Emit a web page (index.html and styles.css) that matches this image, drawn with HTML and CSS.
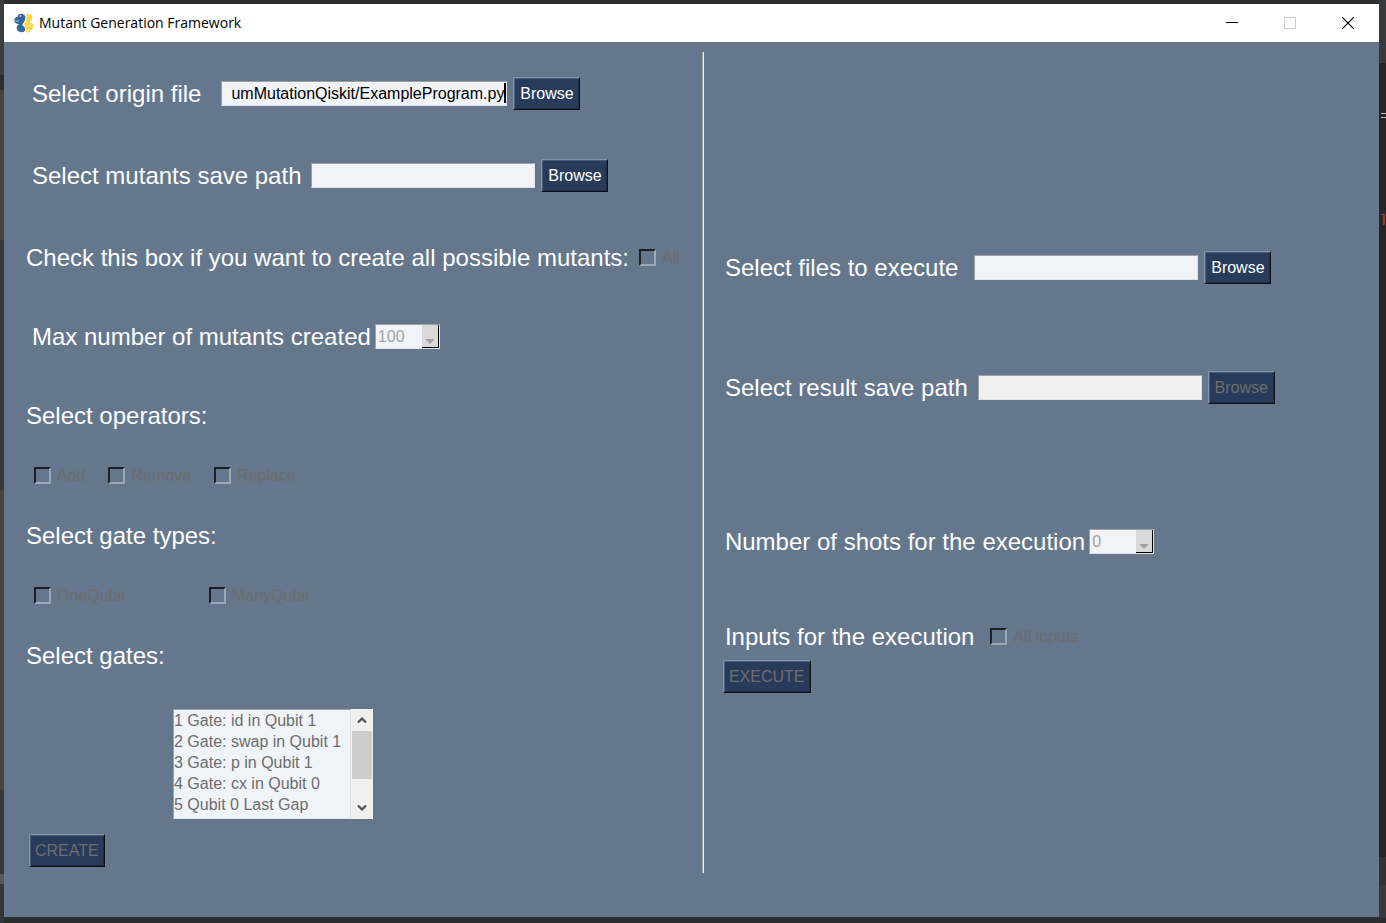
FILE: index.html
```html
<!DOCTYPE html>
<html lang="en">
<head>
<meta charset="utf-8">
<title>Mutant Generation Framework</title>
<link rel="stylesheet" href="styles.css">
</head>
<body>
<div class="desktop">
  <div class="edge edge-left"></div>
  <div class="window">
    <header class="titlebar">
      <svg class="logo" viewBox="0 0 60 60" aria-hidden="true">
        <path fill="#30699d" d="M17 3Q27 1 32 7Q36 12 33 20Q31 27 26 32Q24 36 29 40Q36 46 32 54Q27 60 18 57Q9 54 8 45Q8 38 15 33Q5 34 2 27Q-1 20 4 14Q7 11 10 12Q11 5 17 3Z"/>
        <path fill="#ffd845" d="M36 4Q44 0 51 5Q56 9 55 16Q53 25 45 30Q55 28 58 36Q60 44 55 50Q52 52 50 51Q49 58 41 59Q36 59 35 54Q39 46 33 40Q28 36 31 31Q37 23 38 15Q38 9 36 4Z"/>
        <path d="M4 23Q10 29 15 21M41 37Q48 34 51 42" fill="none" stroke="#fff" stroke-width="2"/>
        <circle cx="19" cy="9" r="2.500" fill="#fff"/><circle cx="42" cy="52" r="2.500" fill="#fff"/>
      </svg>
      <h1 class="title">Mutant Generation Framework</h1>
      <div class="window-buttons">
        <button class="window-button" type="button" aria-label="Minimize"><svg viewBox="0 0 12 12"><path d="M0 5.500H12" stroke="#000"/></svg></button>
        <button class="window-button" type="button" aria-label="Maximize" disabled><svg viewBox="0 0 12 12"><path d="M.5.5H11.500V11.500H.5Z" fill="none" stroke="#ccc"/></svg></button>
        <button class="window-button" type="button" aria-label="Close"><svg viewBox="0 0 12 12"><path d="M0 0L12 12M12 0L0 12" stroke="#000" stroke-width="1.200"/></svg></button>
      </div>
    </header>
    <main class="content">
      <form class="panel create-panel">
        <div class="row indent">
          <label class="label" for="origin">Select origin file</label>
          <span class="active-field gap-xl"><input class="field field-long" id="origin" type="text" value="umMutationQiskit/ExampleProgram.py"><span class="caret"></span></span>
          <button class="button" type="button">Browse</button>
        </div>
        <div class="row indent space-large">
          <label class="label" for="mutants">Select mutants save path</label>
          <input class="field gap-medium" id="mutants" type="text">
          <button class="button" type="button">Browse</button>
        </div>
        <div class="row space-large">
          <span class="label">Check this box if you want to create all possible mutants:</span>
          <label class="check gap-medium"><input type="checkbox" disabled>All</label>
        </div>
        <div class="row indent space-medium">
          <label class="label" for="max">Max number of mutants created</label>
          <span class="combo gap-small"><select id="max" disabled><option>100</option></select><span class="combo-arrow"></span></span>
        </div>
        <div class="row space-medium"><span class="label">Select operators:</span></div>
        <div class="row checks space-small">
          <label class="check"><input type="checkbox" disabled>Add</label>
          <label class="check"><input type="checkbox" disabled>Remove</label>
          <label class="check"><input type="checkbox" disabled>Replace</label>
        </div>
        <div class="row space-small"><span class="label">Select gate types:</span></div>
        <div class="row checks space-small">
          <label class="check check-wide"><input type="checkbox" disabled>OneQubit</label>
          <label class="check"><input type="checkbox" disabled>ManyQubit</label>
        </div>
        <div class="row space-small"><label class="label" for="gates">Select gates:</label></div>
        <div class="listbox">
          <select class="list" id="gates" size="5" multiple disabled>
            <option>1 Gate: id in Qubit 1</option>
            <option>2 Gate: swap in Qubit 1</option>
            <option>3 Gate: p in Qubit 1</option>
            <option>4 Gate: cx in Qubit 0</option>
            <option>5 Qubit 0 Last Gap</option>
          </select>
          <div class="scrollbar">
            <button class="scroll-button" type="button" aria-label="Scroll up"><svg viewBox="0 0 10 8"><path d="M1 6.500L5 2.500L9 6.500" fill="none" stroke="#505050" stroke-width="2.200"/></svg></button>
            <div class="track"><div class="thumb"></div></div>
            <button class="scroll-button" type="button" aria-label="Scroll down"><svg viewBox="0 0 10 8"><path d="M1 1.500L5 5.500L9 1.500" fill="none" stroke="#505050" stroke-width="2.200"/></svg></button>
          </div>
        </div>
        <button class="button create" type="button" disabled>CREATE</button>
      </form>
      <div class="divider"></div>
      <form class="panel execute-panel">
        <div class="row">
          <label class="label" for="files">Select files to execute</label>
          <input class="field gap-large" id="files" type="text">
          <button class="button" type="button">Browse</button>
        </div>
        <div class="row result-row">
          <label class="label" for="result">Select result save path</label>
          <input class="field gap-medium" id="result" type="text" disabled>
          <button class="button" type="button" disabled>Browse</button>
        </div>
        <div class="row shots-row">
          <label class="label" for="shots">Number of shots for the execution</label>
          <span class="combo gap-small"><select id="shots" disabled><option>0</option></select><span class="combo-arrow"></span></span>
        </div>
        <div class="row inputs-row">
          <span class="label">Inputs for the execution</span>
          <label class="check gap-large"><input type="checkbox" disabled>All inputs</label>
        </div>
        <button class="button execute" type="button" disabled>EXECUTE</button>
      </form>
    </main>
  </div>
  <div class="edge edge-right"></div>
</div>
</body>
</html>
```
FILE: styles.css
```css
* { box-sizing: border-box; }

body {
  margin: 0;
  background: #2b2d2f;
  font-family: "Liberation Sans", Arial, sans-serif;
  font-size: 16px;
}

.desktop {
  display: grid;
  grid-template-columns: 4px 1fr 7px;
  min-height: 100vh;
}

.edge-left {
  background: linear-gradient(#3a3c3e 75px, #2b2d2f 75px 90px, #474338 90px 240px, #38393a 240px 490px, #474338 490px 790px, #38393a 790px 874px, #555759 874px 884px, #333536 884px);
}

.edge-right {
  background:
    linear-gradient(#bfc3c7, #bfc3c7) 2px 113px / 5px 1px no-repeat,
    linear-gradient(#bfc3c7, #bfc3c7) 2px 117px / 5px 1px no-repeat,
    linear-gradient(#a23a20, #a23a20) 2px 214px / 3px 1px no-repeat,
    linear-gradient(#a23a20, #a23a20) 4px 214px / 2px 11px no-repeat,
    linear-gradient(#37393b 63px, #262626 63px 857px, #303233 857px 885px, #38393a 885px 918px, #2b2b2b 918px);
}

.window {
  display: flex;
  flex-direction: column;
  margin: 4px 0 6px;
  background: #64778d;
}

.titlebar {
  display: flex;
  align-items: center;
  height: 38px;
  padding: 0 2px 0 10px;
  background: #fff;
}

.logo { width: 20px; height: 20px; }

.title {
  flex: 1;
  margin: 0 0 0 5px;
  font: 400 14px/36px "Open Sans", "Noto Sans", sans-serif;
  color: #000;
}

.window-buttons { display: flex; }

.window-button {
  display: grid;
  place-items: center;
  width: 58px;
  height: 38px;
  padding: 0;
  border: 0;
  background: none;
}

.window-button svg { width: 12px; height: 12px; }

.content {
  display: grid;
  grid-template-columns: 61fr 2px 59fr;
  flex: 1;
  padding: 10px 0 44px;
}

.divider {
  border-left: 1px solid #a0a0a0;
  background: #f0f0f0;
}

.panel { display: flex; flex-direction: column; align-items: flex-start; }
.create-panel { padding: 25px 0 0 22px; }
.execute-panel { padding: 199px 0 0 21px; }

.row { display: flex; align-items: center; height: 33px; }
.indent { padding-left: 6px; }
.space-large { margin-top: 49px; }
.space-medium { margin-top: 46px; }
.space-small { margin-top: 27px; }
.result-row { margin-top: 87px; }
.shots-row { margin-top: 121px; }
.inputs-row { margin-top: 62px; }

.label { color: #fff; font-size: 24px; line-height: 28px; white-space: nowrap; }
.gap-small { margin-left: 4px; }
.gap-medium { margin-left: 10px; }
.gap-large { margin-left: 16px; }
.gap-xl { margin-left: 20px; }

.field {
  width: 224px;
  height: 25px;
  padding: 0 1px;
  border: 1px solid;
  border-color: #a0a0a0 #e3e3e3 #e3e3e3 #a0a0a0;
  background: #f0f3f7;
  color: #000;
  font: inherit;
}

.active-field { position: relative; display: flex; }
.field-long { width: 286px; padding-right: 2px; text-align: right; }
.field:disabled { background: #f0f0f0; }

.caret {
  position: absolute;
  top: 2px;
  right: 1px;
  width: 2px;
  height: 20px;
  background: #000;
}

.button {
  height: 33px;
  padding: 0 5px;
  border: 1px solid;
  border-color: #8494a9 #0c1017 #0c1017 #8494a9;
  background: #283b5b;
  box-shadow: inset 1px 1px #4a5c78, inset -1px -1px #1d2a41;
  color: #fff;
  font: inherit;
}

.button:disabled { color: #6d6d6d; }
.row .button { width: 67px; margin-left: 6px; }

.check { display: flex; align-items: center; gap: 6px; color: #6d6d6d; }

.check input {
  appearance: none;
  width: 17px;
  height: 17px;
  margin: 0;
  border: 2px solid;
  border-color: #1b2027 #9aa8b8 #9aa8b8 #1b2027;
  background: #64778d;
}

.checks { gap: 23px; padding-left: 8px; }
.check-wide { width: 152px; }

.combo { position: relative; width: 65px; height: 25px; }

.combo select {
  appearance: none;
  width: 100%;
  height: 25px;
  padding: 0 2px;
  border: 1px solid;
  border-color: #a0a0a0 #e3e3e3 #e3e3e3 #a0a0a0;
  border-radius: 0;
  background: #f0f3f7;
  color: #a3a3a3;
  font: inherit;
  opacity: 1;
}

.combo-arrow {
  position: absolute;
  top: 1px;
  right: 1px;
  display: grid;
  place-items: end center;
  width: 17px;
  height: 23px;
  padding-bottom: 3px;
  border: solid #000;
  border-width: 0 1px 1px 0;
  background: #d9d9d9;
  pointer-events: none;
}

.combo-arrow::after {
  content: "";
  border: 5px solid transparent;
  border-top-color: #a3a3a3;
  border-bottom: 0;
}

.listbox {
  display: flex;
  height: 110px;
  margin: 37px 0 0 147px;
}

.list {
  appearance: none;
  width: 178px;
  height: 110px;
  padding: 2px 0 0;
  overflow: hidden;
  border: 1px solid;
  border-color: #a0a0a0 #e3e3e3 #e3e3e3 #a0a0a0;
  border-radius: 0;
  background: #f0f3f7;
  font: inherit;
  opacity: 1;
}

.list option { min-height: 21px; padding: 0; color: #6d6d6d; line-height: 21px; }

.scrollbar {
  display: flex;
  flex-direction: column;
  width: 22px;
  padding: 0 1px;
  background: #f0f0f0;
}

.scroll-button {
  display: grid;
  place-items: center;
  height: 22px;
  padding: 0;
  border: 0;
  background: none;
}

.scroll-button svg { width: 10px; height: 8px; }
.track { flex: 1; }
.thumb { height: 48px; background: #cdcdcd; }
.create { margin: 15px 0 0 3px; }
.execute { margin: 7px 0 0; }
.execute-panel > .button { margin-left: -2px; }
```
